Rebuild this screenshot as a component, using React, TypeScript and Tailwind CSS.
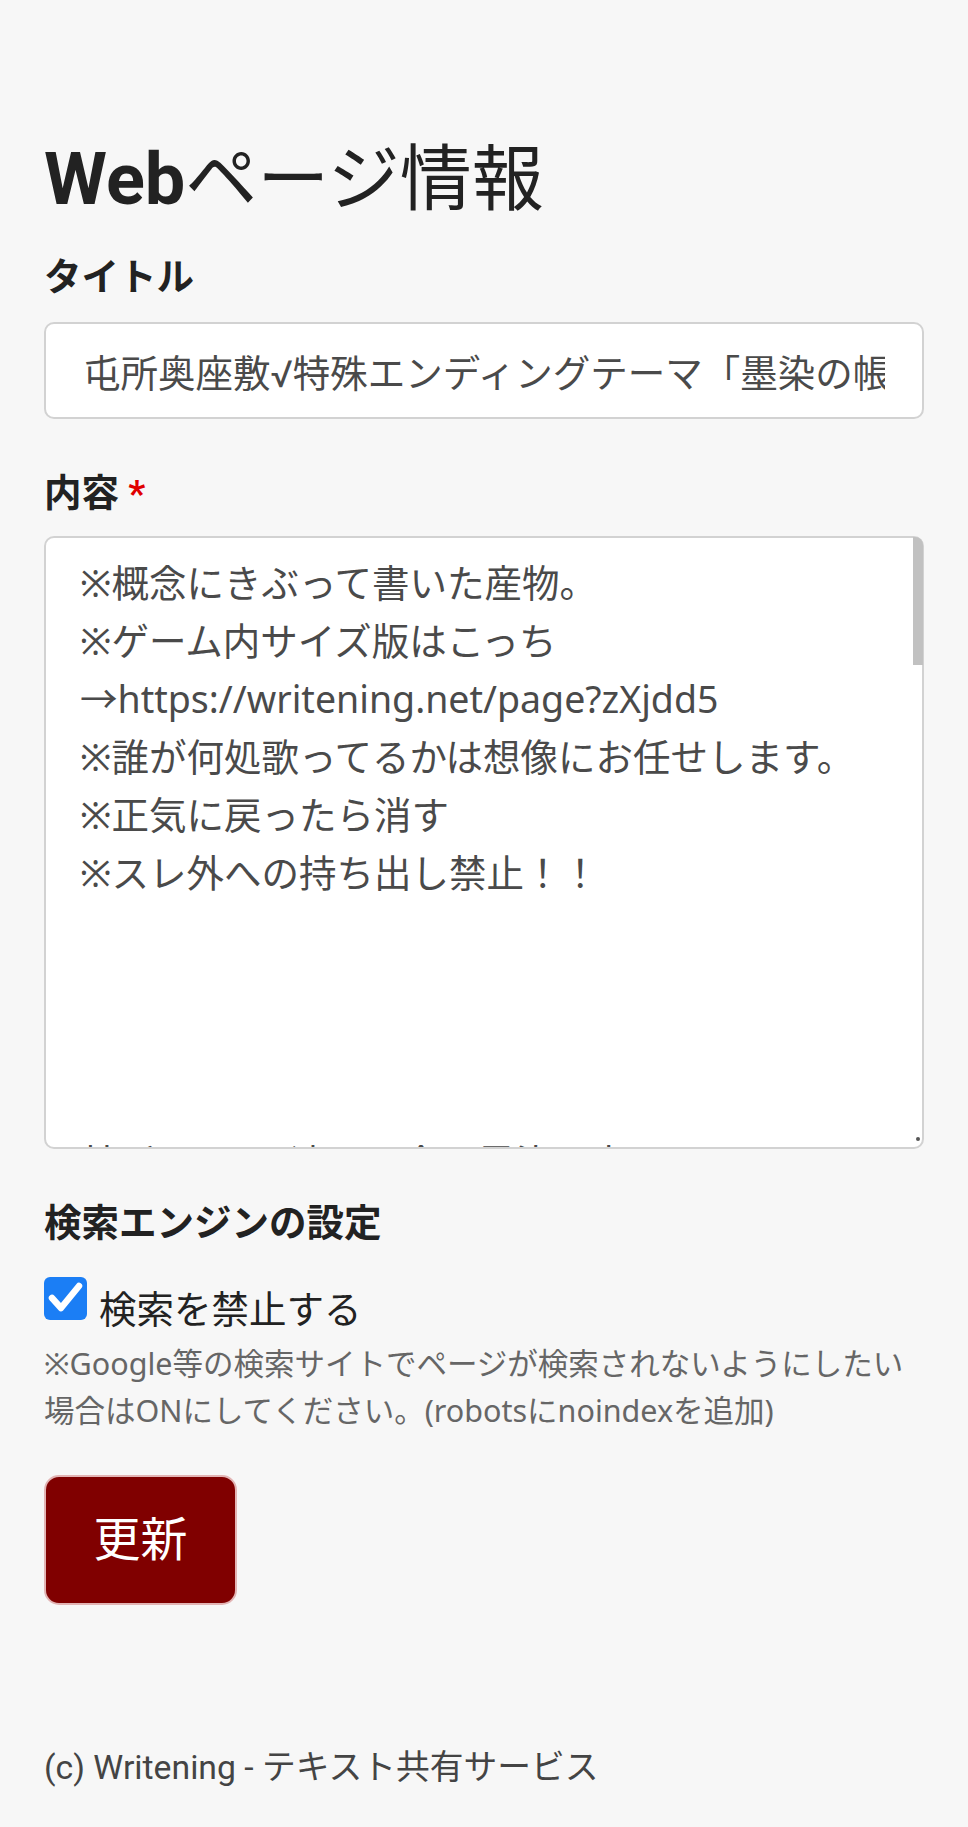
import React from "react";

const contentText = [
  "※概念にきぶって書いた産物。",
  "※ゲーム内サイズ版はこっち",
  "→https://writening.net/page?zXjdd5",
  "※誰が何処歌ってるかは想像にお任せします。",
  "※正気に戻ったら消す",
  "※スレ外への持ち出し禁止！！",
  "",
  "",
  "",
  "",
  "某所(そこ)は遠く、今は墨染の夜",
  "灯りの消えた座敷に",
  "ひとり残された影を",
  "誰が数えてくれるだろう",
  "",
  "花は散り、月は欠けて",
  "それでも刀は錆びずに",
  "約束だけが胸に残る",
  "",
  "墨染の帳が下りる",
  "声も届かぬ夜の底で",
  "名を呼ぶ人はもういない",
  "",
  "忘れてしまえと笑うなら",
  "せめて最後に振り向いて",
  "",
  "屯所の奥の静けさに",
  "まだ誰かの足音がする",
  "",
  "墨染の帳が下りる",
  "夢の終わりを告げるように",
  "",
  "",
  "（終）",
].join("\n");

export default function App() {
  return (
    <div className="min-h-[1827px] bg-[#f7f7f7] font-['Roboto','Noto_Sans_CJK_JP',sans-serif] text-[#222]">
      <main className="px-[44px] pt-[137px]">
        <h1 className="text-[72px] leading-[86px] font-normal">
          <span className="font-bold">Web</span>ページ情報
        </h1>

        {/* タイトル */}
        <label className="mt-[26px] block text-[37.5px] leading-[56px] font-bold">タイトル</label>
        <input
          type="text"
          readOnly
          value="屯所奥座敷√特殊エンディングテーマ「墨染の帳」"
          className="mt-[17px] block h-[97px] w-full rounded-[10px] border-2 border-[#d2d2d2] bg-white px-[37px] text-[37.5px] text-[#4a4a4a] outline-none"
        />

        {/* 内容 */}
        <label className="mt-[46px] block text-[37.5px] leading-[56px] font-bold">
          内容 <span className="text-[#e00000]">*</span>
        </label>
        <div className="relative mt-[15px]">
          <textarea
            readOnly
            value={contentText}
            className="block h-[613px] w-full resize-none overflow-hidden rounded-[10px] border-2 border-[#d2d2d2] bg-white pt-[16px] pr-[20px] pl-[34px] font-['Noto_Sans','Noto_Sans_CJK_JP',sans-serif] text-[37.5px] leading-[58px] text-[#4a4a4a] outline-none"
          />
          {/* scrollbar thumb */}
          <span className="absolute top-[1px] right-[1px] h-[128px] w-[10px] rounded-tr-[8px] bg-[#c1c1c1]" />
          <span className="absolute right-[4px] bottom-[8px] h-[4px] w-[4px] rounded-full bg-[#555]" />
        </div>

        {/* 検索エンジンの設定 */}
        <h2 className="mt-[46px] text-[37.5px] leading-[56px] font-bold">検索エンジンの設定</h2>
        <label className="mt-[26px] flex items-start gap-[12px]">
          <span className="flex h-[43px] w-[43px] shrink-0 items-center justify-center rounded-[6px] bg-[#1b7ef5]">
            <svg viewBox="0 0 43 43" className="h-[43px] w-[43px]">
              <path d="M8 21 L17 31 L35 9" fill="none" stroke="#fff" strokeWidth="6.5" strokeLinecap="round" strokeLinejoin="round" />
            </svg>
          </span>
          <span className="mt-[5px] text-[37.5px] leading-[56px]">検索を禁止する</span>
        </label>
        <p className="mt-[2px] font-['Noto_Sans','Noto_Sans_CJK_JP',sans-serif] text-[30.5px] leading-[46.5px] text-[#666]">
          ※Google等の検索サイトでページが検索されないようにしたい場合はONにしてください。(robotsにnoindexを追加)
        </p>

        <button
          type="button"
          className="mt-[42px] flex h-[130px] w-[193px] items-center justify-center rounded-[15px] border-2 border-[#e2b4b4] bg-[#800000] text-[47px] text-white"
        >
          更新
        </button>
      </main>

      <footer className="px-[44px] pt-[138px] pb-[30px] text-[33.75px] leading-[50px] text-[#444]">
        (c) Writening - テキスト共有サービス
      </footer>
    </div>
  );
}
